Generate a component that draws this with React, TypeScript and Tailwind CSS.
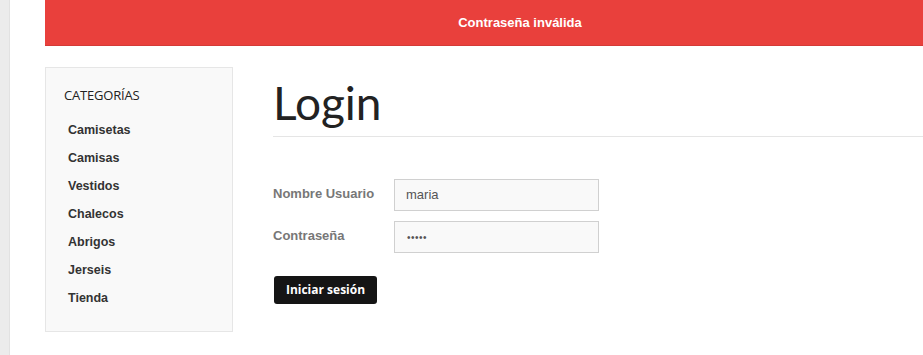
import React from "react";

export default function App() {
  const cats = ["Camisetas", "Camisas", "Vestidos", "Chalecos", "Abrigos", "Jerseis", "Tienda"];
  return (
    <div className="flex h-[355px] w-[923px] overflow-hidden bg-white" style={{ fontFamily: '"Liberation Sans", Arial, sans-serif' }}>
      <div className="w-[10px] shrink-0 bg-[#ececec] border-r border-[#e2e2e2]" />
      <div className="flex-1 pl-[35px]">
        <div className="flex h-[46px] items-center justify-center bg-[#e9403c] border-b border-[#d43a37] pl-[72px] text-[13px] font-bold text-white">
          Contraseña inválida
        </div>
        <div className="mt-[21px] flex">
          <div className="h-[265px] w-[188px] shrink-0 border border-[#e6e6e6] bg-[#f9f9f9] pl-[18px] pt-[18px]">
            <div className="text-[13px] uppercase text-[#222] tracking-[-0.2px]" style={{ fontFamily: '"Open Sans", sans-serif', fontWeight: 400 }}>
              Categorías
            </div>
            <ul className="mt-[16px] flex flex-col">
              {cats.map((c) => (
                <li key={c} className="h-[28px] pl-[4px] text-[12.5px] font-bold leading-[16px] text-[#333]">
                  {c}
                </li>
              ))}
            </ul>
          </div>
          <div className="flex-1 pl-[40px]">
            <h1 className="mt-[7px] text-[46px] leading-[58px] text-[#222]" style={{ fontFamily: 'Lato, sans-serif', fontWeight: 400 }}>
              Login
            </h1>
            <div className="mt-[4px] border-b border-[#e5e5e5]" />
            <div className="mt-[42px] flex flex-col gap-[10px]">
              <div className="flex">
                <label className="w-[121px] pt-[5px] text-[13px] font-bold text-[#777]">Nombre Usuario</label>
                <div className="flex h-[32px] w-[205px] items-center border border-[#d0d0d0] bg-[#f9f9f9] px-[11px] text-[13px] text-[#555]">
                  maria
                </div>
              </div>
              <div className="flex">
                <label className="w-[121px] pt-[5px] text-[13px] font-bold text-[#777]">Contraseña</label>
                <div className="flex h-[32px] w-[205px] items-center border border-[#d0d0d0] bg-[#f9f9f9] px-[12px] text-[10px] tracking-[0.5px] text-[#555]">
                  •••••
                </div>
              </div>
            </div>
            <button className="ml-[1px] mt-[23px] flex h-[28px] w-[103px] items-center justify-center rounded-[3px] bg-[#151515] text-[12px] font-bold text-white" style={{ fontFamily: '"Open Sans", sans-serif' }}>
              Iniciar sesión
            </button>
          </div>
        </div>
      </div>
    </div>
  );
}
